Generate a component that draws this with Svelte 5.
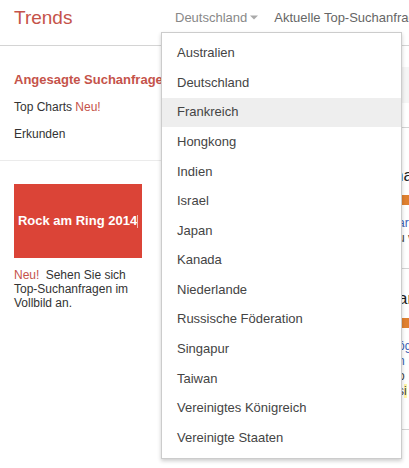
<script>
  const countries = [
    'Australien', 'Deutschland', 'Frankreich', 'Hongkong', 'Indien', 'Israel', 'Japan',
    'Kanada', 'Niederlande', 'Russische Föderation', 'Singapur', 'Taiwan',
    'Vereinigtes Königreich', 'Vereinigte Staaten'
  ];
  let active = $state('Frankreich');
</script>

<div class="page">
  <header>
    <h1>Trends</h1>
    <div class="picker">
      <button class="trigger" aria-haspopup="menu" aria-expanded="true">
        Deutschland
        <svg width="8" height="5" viewBox="0 0 8 5" aria-hidden="true"><path d="M0 0.5h8L4 4.5z" fill="#aaa" /></svg>
      </button>
      <ul class="menu" role="menu">
        {#each countries as country}
          <li role="none">
            <button role="menuitem" class:active={country === active} onmouseenter={() => (active = country)}>{country}</button>
          </li>
        {/each}
      </ul>
    </div>
    <a class="current" href="#top">Aktuelle Top-Suchanfragen</a>
  </header>

  <div class="body">
    <aside>
      <nav>
        <a class="selected" href="#trending">Angesagte Suchanfragen</a>
        <a href="#charts">Top Charts <span class="new">Neu!</span></a>
        <a href="#explore">Erkunden</a>
      </nav>
      <div class="promo">
        <a class="tile" href="#fullscreen">Rock am Ring 2014<i></i></a>
        <p><span class="new">Neu!</span> Sehen Sie sich Top-Suchanfragen im Vollbild an.</p>
      </div>
    </aside>

    <main>
      <div class="bar"></div>
      <article>
        <h2>na</h2>
        <div class="heat"></div>
        <p><a href="#news">ar</a><br />u v</p>
      </article>
      <article>
        <h2>ar</h2>
        <div class="heat"></div>
        <p><a href="#news">ög<br />n</a><br />o<br />s<mark>i</mark></p>
      </article>
      <article></article>
    </main>
  </div>
</div>

<style>
  :global(body) { margin: 0; background: #fff; }
  .page {
    overflow: hidden;
    min-height: 100vh;
    font: 13px/16px "Liberation Sans", Arial, sans-serif;
    color: #444;
  }
  a { color: inherit; text-decoration: none; }
  button {
    font: inherit;
    color: inherit;
    border: 0;
    background: none;
    padding: 0;
    text-align: left;
    cursor: pointer;
  }
  header {
    display: flex;
    align-items: center;
    box-sizing: border-box;
    height: 46px;
    padding: 0 0 10px 14px;
    border-bottom: 1px solid #d4d4d4;
    white-space: nowrap;
  }
  h1 {
    flex: 0 0 161px;
    margin: 0;
    font-size: 19px;
    line-height: 20px;
    font-weight: 400;
    color: #c5534a;
  }
  .picker { position: relative; flex: none; margin-right: 16px; }
  .trigger { display: flex; align-items: center; gap: 3px; color: #888; }
  .current { color: #666; }
  .menu {
    position: absolute;
    z-index: 1;
    top: 22px;
    left: -14px;
    box-sizing: border-box;
    width: 241px;
    min-height: 427px;
    margin: 0;
    padding: 6px 0 5px;
    display: grid;
    grid-auto-rows: 1fr;
    list-style: none;
    background: #fff;
    border: 1px solid #ccc;
    box-shadow: 0 2px 4px rgba(0, 0, 0, 0.2);
  }
  .menu li { display: flex; }
  .menu button { flex: 1; padding: 0 15px; }
  .menu button.active { background: #eee; }

  .body { display: flex; }
  aside { flex: 0 0 162px; min-width: 0; }
  nav {
    display: flex;
    flex-direction: column;
    gap: 11px;
    padding: 26px 0 18px 14px;
    border-bottom: 1px solid #ebebeb;
    font-size: 12px;
    white-space: nowrap;
    color: #333;
  }
  .selected { font-size: 13px; font-weight: 700; color: #c5534a; }
  .new { color: #c5534a; }
  .promo { padding: 23px 20px 0 14px; }
  .promo .new { margin-right: 3px; }
  .tile {
    display: flex;
    align-items: center;
    justify-content: center;
    height: 74px;
    background: #db4437;
    color: #fff;
    font-weight: 700;
    white-space: nowrap;
  }
  .tile i { width: 1px; height: 13px; background: #f3b9b3; }
  .promo p { margin: 10px 0 0; font-size: 12px; line-height: 14px; color: #333; }

  main { flex: 1; min-width: 0; padding-top: 21px; }
  .bar { height: 36px; margin-bottom: 24px; background: #f5f5f5; }
  article {
    box-sizing: border-box;
    padding: 38px 0 0 232px;
    border-top: 1px solid #d4d4d4;
    line-height: 15px;
  }
  article:first-of-type { min-height: 141px; }
  article:nth-of-type(2) { min-height: 161px; padding-top: 20px; }
  article:last-of-type { padding-top: 0; }
  article h2 { margin: 0; font-size: 17px; line-height: 20px; font-weight: 400; color: #222; }
  article:nth-of-type(2) h2 { padding-left: 4px; }
  .heat { height: 10px; margin: 9px 0 11px; background: #e08030; }
  article p { margin: 0; padding-left: 4px; font-size: 12px; white-space: nowrap; }
  article p a { color: #3a5fb5; }
  mark { background: #fff6a8; color: inherit; }
</style>
